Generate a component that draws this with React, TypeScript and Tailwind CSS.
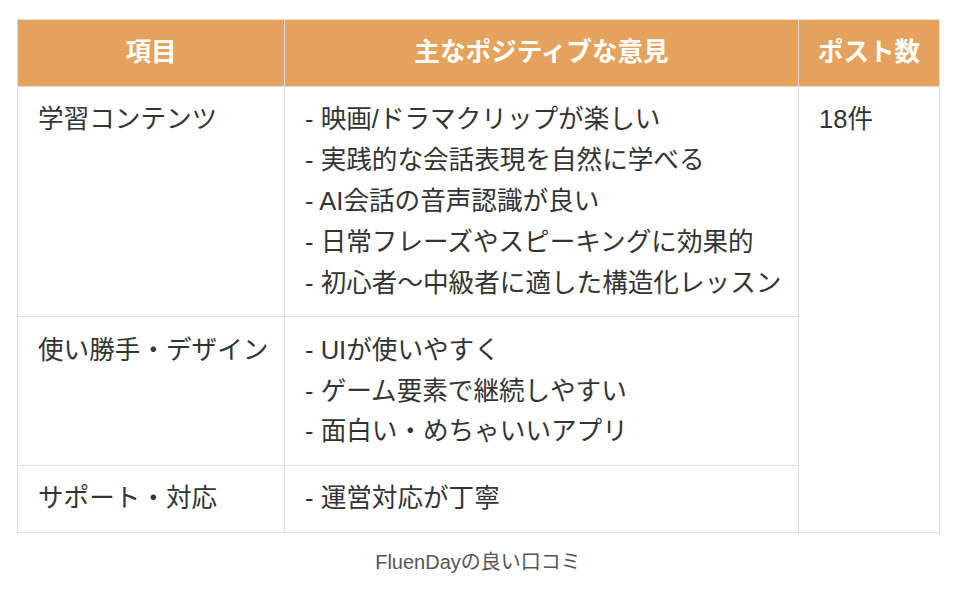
import React from "react";

const font = {
  fontFamily: '"Liberation Sans", "Noto Sans CJK JP", sans-serif',
};

const rows = [
  {
    item: "学習コンテンツ",
    points: [
      "- 映画/ドラマクリップが楽しい",
      "- 実践的な会話表現を自然に学べる",
      "- AI会話の音声認識が良い",
      "- 日常フレーズやスピーキングに効果的",
      "- 初心者〜中級者に適した構造化レッスン",
    ],
  },
  {
    item: "使い勝手・デザイン",
    points: ["- UIが使いやすく", "- ゲーム要素で継続しやすい", "- 面白い・めちゃいいアプリ"],
  },
  {
    item: "サポート・対応",
    points: ["- 運営対応が丁寧"],
  },
];

export default function App() {
  return (
    <div className="min-h-[598px] w-[960px] bg-white pt-[19px]" style={font}>
      <table className="ml-[17px] w-[922px] table-fixed border-collapse text-[25.6px] leading-[1.6] text-[#333]">
        <colgroup>
          <col className="w-[267px]" />
          <col className="w-[514px]" />
          <col className="w-[141px]" />
        </colgroup>
        <thead>
          <tr className="bg-[#e5a25d] text-white">
            <th className="whitespace-nowrap border border-[#dddddd] px-[18px] py-[12.4px] text-center font-bold">項目</th>
            <th className="whitespace-nowrap border border-[#dddddd] px-[18px] py-[12.4px] text-center font-bold">主なポジティブな意見</th>
            <th className="whitespace-nowrap border border-[#dddddd] px-[10px] py-[12.4px] text-center font-bold">ポスト数</th>
          </tr>
        </thead>
        <tbody>
          {rows.map((r, i) => (
            <tr key={i}>
              <td className="border border-[#dddddd] px-[20px] py-[12.4px] align-top whitespace-nowrap">{r.item}</td>
              <td className="border border-[#dddddd] px-[20px] py-[12.4px] align-top whitespace-nowrap">
                {r.points.map((p, j) => (
                  <div key={j}>{p}</div>
                ))}
              </td>
              {i === 0 && (
                <td rowSpan={3} className="border border-[#dddddd] px-[20px] py-[12.4px] align-top">
                  18件
                </td>
              )}
            </tr>
          ))}
        </tbody>
      </table>
      <div className="ml-[17px] mt-[13px] w-[922px] text-center text-[20px] leading-[32px] text-[#555]">
        FluenDayの良い口コミ
      </div>
    </div>
  );
}
